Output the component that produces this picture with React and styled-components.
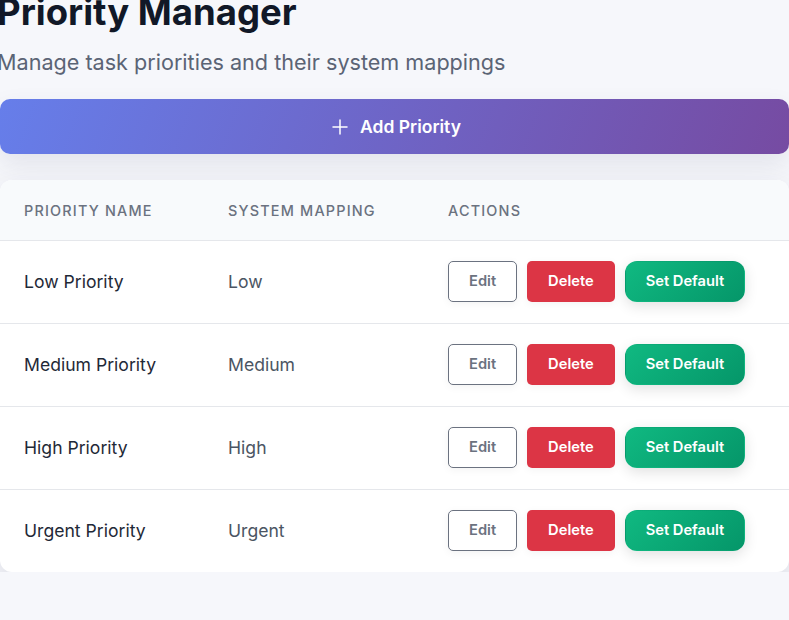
import React from "react";
import styled, { createGlobalStyle } from "styled-components";
import { Plus } from "lucide-react";

const GlobalStyle = createGlobalStyle`
  html, body { margin: 0; padding: 0; }
  body {
    background: #f6f7fb;
    font-family: Inter, "Noto Sans", "Liberation Sans", sans-serif;
    overflow: hidden;
  }
`;

const Page = styled.div`
  width: 789px;
  display: flex;
  flex-direction: column;
`;

const Header = styled.header`
  margin: -9px 0 0 -3px;
`;

const Title = styled.h1`
  margin: 0 0 12px;
  font-size: 36.5px;
  line-height: 43px;
  font-weight: 700;
  color: #111827;
`;

const Subtitle = styled.p`
  margin: 0;
  font-size: 21.6px;
  line-height: 32px;
  color: #5b6475;
`;

const AddButton = styled.button`
  margin-top: 21px;
  height: 55px;
  border: none;
  border-radius: 10px;
  background: linear-gradient(110deg, #667eea 0%, #764ba2 100%);
  color: #fff;
  font-family: inherit;
  font-size: 17.5px;
  font-weight: 600;
  display: flex;
  align-items: center;
  justify-content: center;
  gap: 8px;
  box-shadow: 0 10px 25px rgba(60, 60, 100, 0.1);
  cursor: pointer;
`;

const Card = styled.div`
  margin-top: 26px;
  background: #fff;
  border-radius: 12px;
  overflow: hidden;
  box-shadow: 0 14px 36px rgba(30, 30, 60, 0.13);
`;

const Table = styled.table`
  width: 100%;
  border-collapse: collapse;
  table-layout: fixed;
`;

const Th = styled.th`
  width: ${(p) => p.$w || "auto"};
  text-align: left;
  padding: 0 24px;
  height: 60px;
  background: #f8fafc;
  border-bottom: 1px solid #e5e7eb;
  font-size: 14.4px;
  font-weight: 500;
  letter-spacing: 1.2px;
  text-transform: uppercase;
  color: #6b7280;
`;

const Tr = styled.tr`
  & + & td { border-top: 1px solid #e5e7eb; }
`;

const Td = styled.td`
  padding: 0 24px 2px;
  height: 80px;
  font-size: 17.6px;
  color: ${(p) => (p.$muted ? "#4b5563" : "#1f2937")};
`;

const Actions = styled.div`
  display: flex;
  gap: 10px;
`;

const ActionButton = styled.button`
  flex: none;
  white-space: nowrap;
  height: 41px;
  padding: 0 20px;
  font-family: inherit;
  font-size: 14.7px;
  font-weight: 600;
  cursor: pointer;
  border-radius: ${(p) => (p.$variant === "default" ? "12px" : "5px")};
  border: 1px solid ${(p) => (p.$variant === "edit" ? "#6b7280" : "transparent")};
  color: ${(p) => (p.$variant === "edit" ? "#6b7280" : "#fff")};
  background: ${(p) =>
    p.$variant === "edit"
      ? "#fff"
      : p.$variant === "delete"
      ? "#dc3545"
      : "linear-gradient(135deg, #10b981 0%, #059669 100%)"};
  box-shadow: ${(p) =>
    p.$variant === "default"
      ? "0 4px 14px rgba(0, 0, 0, 0.12)"
      : "0 2px 8px rgba(0, 0, 0, 0.05)"};
`;

const rows = [
  { name: "Low Priority", map: "Low" },
  { name: "Medium Priority", map: "Medium" },
  { name: "High Priority", map: "High" },
  { name: "Urgent Priority", map: "Urgent" },
];

export default function App() {
  return (
    <>
      <GlobalStyle />
      <Page>
        <Header>
          <Title>Priority Manager</Title>
          <Subtitle>Manage task priorities and their system mappings</Subtitle>
        </Header>
        <AddButton>
          <Plus size={24} strokeWidth={1.5} />
          Add Priority
        </AddButton>
        <Card>
          <Table>
            <thead>
              <tr>
                <Th $w="156px">Priority Name</Th>
                <Th $w="172px">System Mapping</Th>
                <Th>Actions</Th>
              </tr>
            </thead>
            <tbody>
              {rows.map((r) => (
                <Tr key={r.name}>
                  <Td>{r.name}</Td>
                  <Td $muted>{r.map}</Td>
                  <Td>
                    <Actions>
                      <ActionButton $variant="edit">Edit</ActionButton>
                      <ActionButton $variant="delete">Delete</ActionButton>
                      <ActionButton $variant="default">Set Default</ActionButton>
                    </Actions>
                  </Td>
                </Tr>
              ))}
            </tbody>
          </Table>
        </Card>
      </Page>
    </>
  );
}
